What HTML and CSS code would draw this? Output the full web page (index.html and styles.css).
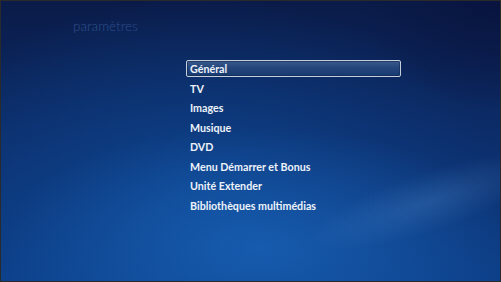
FILE: index.html
```html
<!DOCTYPE html>
<html lang="fr">
<head>
    <meta charset="UTF-8">
    <title>paramètres</title>
    <link rel="stylesheet" href="styles.css">
</head>
<body>

<div class="screen">
    <div class="glow"></div>
    <h1 class="title">paramètres</h1>

    <ul class="menu">
        <li class="item selected">Général</li>
        <li class="item">TV</li>
        <li class="item">Images</li>
        <li class="item">Musique</li>
        <li class="item">DVD</li>
        <li class="item">Menu Démarrer et Bonus</li>
        <li class="item">Unité Extender</li>
        <li class="item">Bibliothèques multimédias</li>
    </ul>
</div>

</body>
</html>
```

FILE: styles.css
```css
body {
    margin: 0;
    background-color: #1c1c1c;
    font-family: Lato, "Open Sans", sans-serif;
}
.screen {
    position: relative;
    width: 499px;
    height: 280px;
    border: 1px solid #2a2a2a;
    overflow: hidden;
    background:
        radial-gradient(ellipse 260px 120px at 52% 88%, rgba(30, 110, 200, 0.55), rgba(30, 110, 200, 0) 100%),
        radial-gradient(ellipse 300px 200px at 40% 70%, rgba(15, 80, 160, 0.6), rgba(15, 80, 160, 0) 100%),
        radial-gradient(ellipse 140px 110px at 100% 0%, rgba(8, 18, 60, 0.8), rgba(8, 18, 60, 0) 100%),
        linear-gradient(to bottom, #0a1b48 0%, #0c2c68 45%, #0d3f88 100%);
}
/* light streak lower right */
.glow {
    position: absolute;
    left: 300px;
    top: 170px;
    width: 260px;
    height: 60px;
    transform: rotate(-18deg);
    background: radial-gradient(ellipse at center, rgba(120, 180, 240, 0.18), rgba(120, 180, 240, 0) 70%);
}
.title {
    margin: 0;
    padding: 17px 0 0 72px;
    font-size: 13.5px;
    font-weight: 300;
    color: #2d4f8c;
}
.menu {
    position: relative;
    list-style: none;
    margin: 26px 0 0 185px;
    padding: 0;
    width: 215px;
}
.item {
    height: 15px;
    line-height: 15px;
    margin-bottom: 2.57px;
    padding-left: 3px;
    font-size: 10.7px;
    font-weight: 700;
    color: #eef3fb;
    border: 1px solid transparent;
    border-radius: 2px;
}
.item.selected {
    border-color: #c4cedd;
    background: linear-gradient(to bottom, #3a5a8c 0%, #25467c 45%, #173a72 100%);
    box-shadow: inset 0 0 0 1px rgba(20, 40, 80, 0.6);
}
```
